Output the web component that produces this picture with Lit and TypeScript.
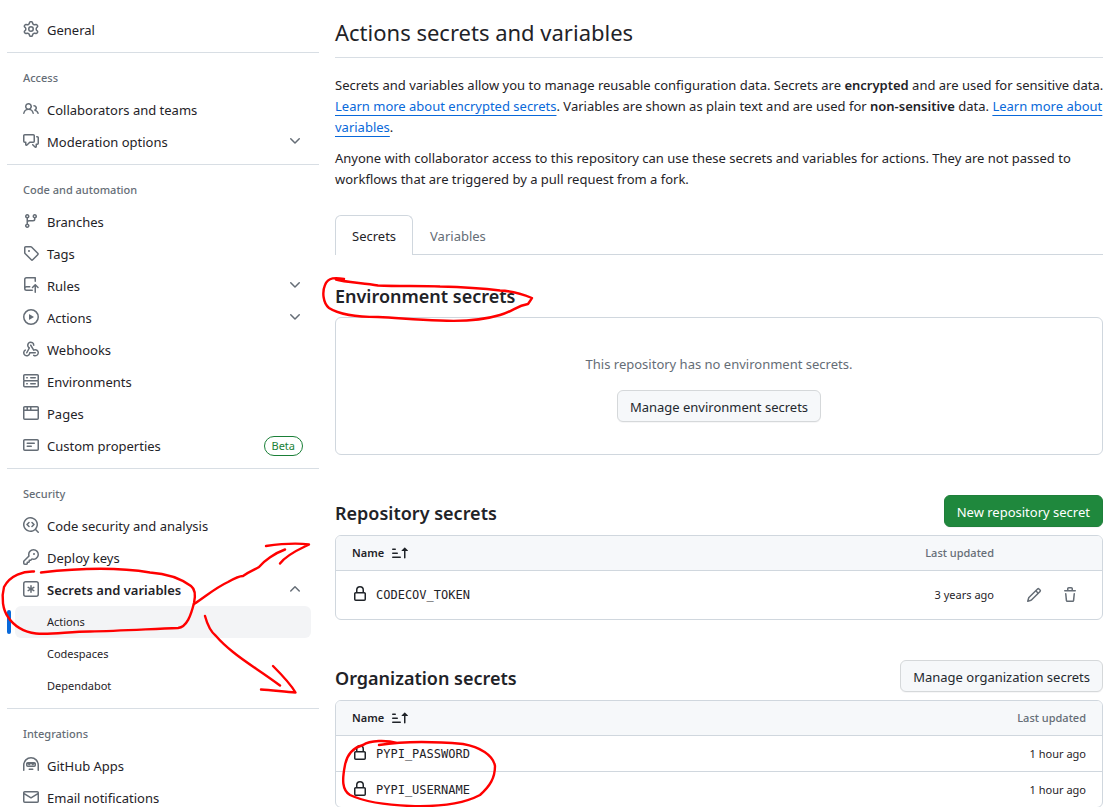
import { LitElement, html, css, svg, nothing } from "lit";
import { customElement, property, state } from "lit/decorators.js";
import { classMap } from "lit/directives/class-map.js";

const ICONS: Record<string, string> = {
  gear: "M8 0a8.2 8.2 0 0 1 .701.031C9.444.095 9.99.645 10.16 1.29l.288 1.107c.018.066.079.158.212.224.231.114.454.243.668.386.123.082.233.09.299.071l1.103-.303c.644-.176 1.392.021 1.82.63.27.385.506.792.704 1.218.315.675.111 1.422-.364 1.891l-.814.806c-.049.048-.098.147-.088.294.016.257.016.515 0 .772-.01.147.038.246.088.294l.814.806c.475.469.679 1.216.364 1.891a7.977 7.977 0 0 1-.704 1.217c-.428.61-1.176.807-1.82.63l-1.102-.302c-.067-.019-.177-.011-.3.071a5.909 5.909 0 0 1-.668.386c-.133.066-.194.158-.211.224l-.29 1.106c-.168.646-.715 1.196-1.458 1.26a8.006 8.006 0 0 1-1.402 0c-.743-.064-1.289-.614-1.458-1.26l-.289-1.106c-.018-.066-.079-.158-.212-.224a5.738 5.738 0 0 1-.668-.386c-.123-.082-.233-.09-.299-.071l-1.103.303c-.644.176-1.392-.021-1.82-.63a8.12 8.12 0 0 1-.704-1.218c-.315-.675-.111-1.422.363-1.891l.815-.806c.05-.048.098-.147.088-.294a6.214 6.214 0 0 1 0-.772c.01-.147-.038-.246-.088-.294l-.815-.806C.635 6.045.431 5.298.746 4.623a7.92 7.92 0 0 1 .704-1.217c.428-.61 1.176-.807 1.82-.63l1.102.302c.067.019.177.011.3-.071.214-.143.437-.272.668-.386.133-.066.194-.158.211-.224l.29-1.106C6.009.645 6.556.095 7.299.03 7.53.01 7.764 0 8 0Zm-.571 1.525c-.036.003-.108.036-.137.146l-.289 1.105c-.147.561-.549.967-.998 1.189-.173.086-.34.183-.5.29-.417.278-.97.423-1.529.27l-1.103-.303c-.109-.03-.175.016-.195.045-.22.312-.412.644-.573.99-.014.031-.021.11.059.19l.815.806c.411.406.562.957.53 1.456a4.709 4.709 0 0 0 0 .582c.032.499-.119 1.05-.53 1.456l-.815.806c-.081.08-.073.159-.059.19.162.346.353.677.573.989.02.03.085.076.195.046l1.102-.303c.56-.153 1.113-.008 1.53.27.161.107.328.204.501.29.447.222.85.629.997 1.189l.289 1.105c.029.109.101.143.137.146a6.6 6.6 0 0 0 1.142 0c.036-.003.108-.036.137-.146l.289-1.105c.147-.561.549-.967.998-1.189.173-.086.34-.183.5-.29.417-.278.97-.423 1.529-.27l1.103.303c.109.029.175-.016.195-.045.22-.313.411-.644.573-.99.014-.031.021-.11-.059-.19l-.815-.806c-.411-.406-.562-.957-.53-1.456a4.709 4.709 0 0 0 0-.582c-.032-.499.119-1.05.53-1.456l.815-.806c.081-.08.073-.159.059-.19a6.464 6.464 0 0 0-.573-.989c-.02-.03-.085-.076-.195-.046l-1.102.303c-.56.153-1.113.008-1.53-.27a4.44 4.44 0 0 0-.501-.29c-.447-.222-.85-.629-.997-1.189l-.289-1.105c-.029-.11-.101-.143-.137-.146a6.6 6.6 0 0 0-1.142 0ZM11 8a3 3 0 1 1-6 0 3 3 0 0 1 6 0ZM9.5 8a1.5 1.5 0 1 0-3.001.001A1.5 1.5 0 0 0 9.5 8Z",
  people: "M2 5.5a3.5 3.5 0 1 1 5.898 2.549 5.508 5.508 0 0 1 3.034 4.084.75.75 0 1 1-1.482.235 4 4 0 0 0-7.9 0 .75.75 0 0 1-1.482-.236A5.507 5.507 0 0 1 3.102 8.05 3.493 3.493 0 0 1 2 5.5ZM11 4a3.001 3.001 0 0 1 2.22 5.018 5.01 5.01 0 0 1 2.56 3.012.749.749 0 0 1-.885.954.752.752 0 0 1-.549-.514 3.507 3.507 0 0 0-2.522-2.372.75.75 0 0 1-.574-.73v-.352a.75.75 0 0 1 .416-.672A1.5 1.5 0 0 0 11 5.5.75.75 0 0 1 11 4Zm-5.5-.5a2 2 0 1 0-.001 3.999A2 2 0 0 0 5.5 3.5Z",
  discussion: "M1.75 1h8.5c.966 0 1.75.784 1.75 1.75v5.5A1.75 1.75 0 0 1 10.25 10H7.061l-2.574 2.573A1.458 1.458 0 0 1 2 11.543V10h-.25A1.75 1.75 0 0 1 0 8.25v-5.5C0 1.784.784 1 1.75 1ZM1.5 2.75v5.5c0 .138.112.25.25.25h1a.75.75 0 0 1 .75.75v2.19l2.72-2.72a.749.749 0 0 1 .53-.22h3.5a.25.25 0 0 0 .25-.25v-5.5a.25.25 0 0 0-.25-.25h-8.5a.25.25 0 0 0-.25.25Zm13 2a.25.25 0 0 0-.25-.25h-.5a.75.75 0 0 1 0-1.5h.5c.966 0 1.75.784 1.75 1.75v5.5A1.75 1.75 0 0 1 14.25 12H14v1.543a1.458 1.458 0 0 1-2.487 1.03L9.22 12.28a.749.749 0 0 1 .326-1.275.749.749 0 0 1 .734.215l2.22 2.22v-2.19a.75.75 0 0 1 .75-.75h1a.25.25 0 0 0 .25-.25Z",
  branch: "M9.5 3.25a2.25 2.25 0 1 1 3 2.122V6A2.5 2.5 0 0 1 10 8.5H6a1 1 0 0 0-1 1v1.128a2.251 2.251 0 1 1-1.5 0V5.372a2.25 2.25 0 1 1 1.5 0v1.836A2.493 2.493 0 0 1 6 7h4a1 1 0 0 0 1-1v-.628A2.25 2.25 0 0 1 9.5 3.25Zm-6 0a.75.75 0 1 0 1.5 0 .75.75 0 0 0-1.5 0Zm8.25-.75a.75.75 0 1 0 0 1.5.75.75 0 0 0 0-1.5ZM4.25 12a.75.75 0 1 0 0 1.5.75.75 0 0 0 0-1.5Z",
  tag: "M1 7.775V2.75C1 1.784 1.784 1 2.75 1h5.025c.464 0 .91.184 1.238.513l6.25 6.25a1.75 1.75 0 0 1 0 2.474l-5.026 5.026a1.75 1.75 0 0 1-2.474 0l-6.25-6.25A1.752 1.752 0 0 1 1 7.775Zm1.5 0c0 .066.026.13.073.177l6.25 6.25a.25.25 0 0 0 .354 0l5.025-5.025a.25.25 0 0 0 0-.354l-6.25-6.25a.25.25 0 0 0-.177-.073H2.75a.25.25 0 0 0-.25.25ZM6 5a1 1 0 1 1 0 2 1 1 0 0 1 0-2Z",
  rules: "M1 2.5A2.5 2.5 0 0 1 3.5 0h8.75a.75.75 0 0 1 .75.75v3.5a.75.75 0 0 1-1.5 0V1.5h-8a1 1 0 0 0-1 1v6.708A2.493 2.493 0 0 1 3.5 9h3.25a.75.75 0 0 1 0 1.5H3.5a1 1 0 0 0 0 2h5.75a.75.75 0 0 1 0 1.5H3.5A2.5 2.5 0 0 1 1 11.5ZM12.25 7c.2 0 .39.08.53.22l2.75 2.75a.75.75 0 0 1-1.06 1.06L13 9.56v5.69a.75.75 0 0 1-1.5 0V9.56l-1.47 1.47a.75.75 0 0 1-1.06-1.06l2.75-2.75a.75.75 0 0 1 .53-.22Z",
  play: "M8 0a8 8 0 1 1 0 16A8 8 0 0 1 8 0ZM1.5 8a6.5 6.5 0 1 0 13 0 6.5 6.5 0 0 0-13 0Zm4.879-2.773 4.264 2.559a.25.25 0 0 1 0 .428l-4.264 2.559A.25.25 0 0 1 6 10.559V5.442a.25.25 0 0 1 .379-.215Z",
  webhook: "M5.5 4.25a2.25 2.25 0 0 1 4.5 0 .75.75 0 0 0 1.5 0 3.75 3.75 0 1 0-6.14 2.889l-2.272 4.258a.75.75 0 0 0 1.324.706L7 7.25a.75.75 0 0 0-.309-1.015A2.25 2.25 0 0 1 5.5 4.25ZM7.364 3.607a.75.75 0 0 1 1.03.257l2.608 4.349a3.75 3.75 0 1 1-.628 6.785.75.75 0 0 1 .752-1.299 2.25 2.25 0 1 0-.033-3.88.75.75 0 0 1-1.03-.256L7.107 4.636a.75.75 0 0 1 .257-1.03ZM2.9 8.776A.75.75 0 0 1 2.625 9.8 2.25 2.25 0 1 0 6 11.75a.75.75 0 0 1 .75-.751h5.5a.75.75 0 0 1 0 1.5H7.425a3.751 3.751 0 1 1-5.55-3.998.75.75 0 0 1 1.024.274Z",
  server: "M1.75 1h12.5c.966 0 1.75.784 1.75 1.75v4c0 .372-.116.717-.314 1 .198.283.314.628.314 1v4a1.75 1.75 0 0 1-1.75 1.75H1.75A1.75 1.75 0 0 1 0 12.75v-4c0-.358.109-.707.314-1a1.739 1.739 0 0 1-.314-1v-4C0 1.784.784 1 1.75 1ZM1.5 2.75v4c0 .138.112.25.25.25h12.5a.25.25 0 0 0 .25-.25v-4a.25.25 0 0 0-.25-.25H1.75a.25.25 0 0 0-.25.25Zm.25 5.75a.25.25 0 0 0-.25.25v4c0 .138.112.25.25.25h12.5a.25.25 0 0 0 .25-.25v-4a.25.25 0 0 0-.25-.25ZM7 4.75A.75.75 0 0 1 7.75 4h4.5a.75.75 0 0 1 0 1.5h-4.5A.75.75 0 0 1 7 4.75ZM7.75 10h4.5a.75.75 0 0 1 0 1.5h-4.5a.75.75 0 0 1 0-1.5ZM3 4.75A.75.75 0 0 1 3.75 4h.5a.75.75 0 0 1 0 1.5h-.5A.75.75 0 0 1 3 4.75ZM3.75 10h.5a.75.75 0 0 1 0 1.5h-.5a.75.75 0 0 1 0-1.5Z",
  browser: "M0 2.75C0 1.784.784 1 1.75 1h12.5c.966 0 1.75.784 1.75 1.75v10.5A1.75 1.75 0 0 1 14.25 15H1.75A1.75 1.75 0 0 1 0 13.25ZM14.5 6h-13v7.25c0 .138.112.25.25.25h12.5a.25.25 0 0 0 .25-.25Zm-6-3.5v2h6V2.75a.25.25 0 0 0-.25-.25ZM5 2.5v2h2v-2Zm-3.25 0a.25.25 0 0 0-.25.25V4.5h2v-2Z",
  note: "M0 3.75C0 2.784.784 2 1.75 2h12.5c.966 0 1.75.784 1.75 1.75v8.5A1.75 1.75 0 0 1 14.25 14H1.75A1.75 1.75 0 0 1 0 12.25Zm1.75-.25a.25.25 0 0 0-.25.25v8.5c0 .138.112.25.25.25h12.5a.25.25 0 0 0 .25-.25v-8.5a.25.25 0 0 0-.25-.25ZM3.5 6.25a.75.75 0 0 1 .75-.75h7a.75.75 0 0 1 0 1.5h-7a.75.75 0 0 1-.75-.75Zm.75 2.25h4a.75.75 0 0 1 0 1.5h-4a.75.75 0 0 1 0-1.5Z",
  codescan: "M8.47 4.97a.75.75 0 0 0 0 1.06L9.94 7.5 8.47 8.97a.75.75 0 1 0 1.06 1.06l2-2a.75.75 0 0 0 0-1.06l-2-2a.75.75 0 0 0-1.06 0ZM6.53 6.03a.75.75 0 0 0-1.06-1.06l-2 2a.75.75 0 0 0 0 1.06l2 2a.75.75 0 1 0 1.06-1.06L5.06 7.5l1.47-1.47ZM12.246 13.307a7.501 7.501 0 1 1 1.06-1.06l2.474 2.473a.749.749 0 0 1-.326 1.275.749.749 0 0 1-.734-.215ZM1.5 7.5a6.002 6.002 0 0 0 3.608 5.504 6.002 6.002 0 0 0 6.486-1.117.748.748 0 0 1 .292-.293A6 6 0 1 0 1.5 7.5Z",
  key: "M10.5 0a5.499 5.499 0 1 1-1.288 10.848l-.932.932a.749.749 0 0 1-.53.22H7v.75a.749.749 0 0 1-.22.53l-.5.5a.749.749 0 0 1-.53.22H5v.75a.749.749 0 0 1-.22.53l-.5.5a.749.749 0 0 1-.53.22h-2A1.75 1.75 0 0 1 0 14.25v-2c0-.199.079-.389.22-.53l4.932-4.932A5.5 5.5 0 0 1 10.5 0Zm-4 5.5c-.001.431.069.86.205 1.269a.75.75 0 0 1-.181.768L1.5 12.56v1.69c0 .138.112.25.25.25h1.69l.06-.06v-1.19a.75.75 0 0 1 .75-.75h1.19l.06-.06v-1.19a.75.75 0 0 1 .75-.75h1.19l1.023-1.025a.75.75 0 0 1 .768-.18A4 4 0 1 0 6.5 5.5ZM11 6a1 1 0 1 1 0-2 1 1 0 0 1 0 2Z",
  asterisk: "M0 2.75A2.75 2.75 0 0 1 2.75 0h10.5A2.75 2.75 0 0 1 16 2.75v10.5A2.75 2.75 0 0 1 13.25 16H2.75A2.75 2.75 0 0 1 0 13.25ZM2.75 1.5c-.69 0-1.25.56-1.25 1.25v10.5c0 .69.56 1.25 1.25 1.25h10.5c.69 0 1.25-.56 1.25-1.25V2.75c0-.69-.56-1.25-1.25-1.25ZM8 4a.75.75 0 0 1 .75.75V6.7l1.69-.975a.75.75 0 0 1 .75 1.3L9.5 8l1.69.976a.75.75 0 0 1-.75 1.298L8.75 9.3v1.951a.75.75 0 0 1-1.5 0V9.299l-1.69.976a.75.75 0 0 1-.75-1.3L6.5 8l-1.69-.975a.75.75 0 0 1 .75-1.3l1.69.976V4.75A.75.75 0 0 1 8 4Z",
  hubot: "M0 8a8 8 0 1 1 16 0v5.25a.75.75 0 0 1-1.5 0V8a6.5 6.5 0 1 0-13 0v5.25a.75.75 0 0 1-1.5 0ZM5.5 12.25a.75.75 0 0 1 .75-.75h3.5a.75.75 0 0 1 0 1.5h-3.5a.75.75 0 0 1-.75-.75ZM3 6.75C3 5.784 3.784 5 4.75 5h6.5c.966 0 1.75.784 1.75 1.75v1.5A1.75 1.75 0 0 1 11.25 10h-6.5A1.75 1.75 0 0 1 3 8.25ZM4.5 6.9v1.35c0 .138.112.25.25.25h6.5a.25.25 0 0 0 .25-.25V6.9l-1.1 1.1a.75.75 0 0 1-1.06 0L8 6.9 6.66 8a.75.75 0 0 1-1.06 0Z",
  mail: "M1.75 2h12.5c.966 0 1.75.784 1.75 1.75v8.5A1.75 1.75 0 0 1 14.25 14H1.75A1.75 1.75 0 0 1 0 12.25v-8.5C0 2.784.784 2 1.75 2ZM1.5 12.251c0 .138.112.25.25.25h12.5a.25.25 0 0 0 .25-.25V5.809L8.38 9.397a.75.75 0 0 1-.76 0L1.5 5.809v6.442Zm13-8.181v-.32a.25.25 0 0 0-.25-.25H1.75a.25.25 0 0 0-.25.25v.32L8 7.88Z",
  down: "M12.78 5.22a.749.749 0 0 1 0 1.06l-4.25 4.25a.749.749 0 0 1-1.06 0L3.22 6.28a.749.749 0 1 1 1.06-1.06L8 8.939l3.72-3.719a.749.749 0 0 1 1.06 0Z",
  up: "M3.22 10.53a.749.749 0 0 1 0-1.06l4.25-4.25a.749.749 0 0 1 1.06 0l4.25 4.25a.749.749 0 1 1-1.06 1.06L8 6.811 4.28 10.53a.749.749 0 0 1-1.06 0Z",
  lock: "M4 4a4 4 0 0 1 8 0v2h.25c.966 0 1.75.784 1.75 1.75v5.5A1.75 1.75 0 0 1 12.25 15h-8.5A1.75 1.75 0 0 1 2 13.25v-5.5C2 6.784 2.784 6 3.75 6H4Zm8.25 3.5h-8.5a.25.25 0 0 0-.25.25v5.5c0 .138.112.25.25.25h8.5a.25.25 0 0 0 .25-.25v-5.5a.25.25 0 0 0-.25-.25ZM10.5 6V4a2.5 2.5 0 1 0-5 0v2Z",
  pencil: "M11.013 1.427a1.75 1.75 0 0 1 2.474 0l1.086 1.086a1.75 1.75 0 0 1 0 2.474l-8.61 8.61c-.21.21-.47.364-.756.445l-3.251.93a.75.75 0 0 1-.927-.928l.929-3.25c.081-.286.235-.547.445-.758l8.61-8.61Zm.176 4.823L9.75 4.81l-6.286 6.287a.253.253 0 0 0-.064.108l-.558 1.953 1.953-.558a.253.253 0 0 0 .108-.064Zm1.238-3.763a.25.25 0 0 0-.354 0L10.811 3.75l1.439 1.44 1.263-1.263a.25.25 0 0 0 0-.354Z",
  trash: "M11 1.75V3h2.25a.75.75 0 0 1 0 1.5H2.75a.75.75 0 0 1 0-1.5H5V1.75C5 .784 5.784 0 6.75 0h2.5C10.216 0 11 .784 11 1.75ZM4.496 6.675l.66 6.6a.25.25 0 0 0 .249.225h5.19a.25.25 0 0 0 .249-.225l.66-6.6a.75.75 0 0 1 1.492.149l-.66 6.6A1.748 1.748 0 0 1 10.595 15h-5.19a1.75 1.75 0 0 1-1.741-1.575l-.66-6.6a.75.75 0 1 1 1.492-.15ZM6.5 1.75V3h3V1.75a.25.25 0 0 0-.25-.25h-2.5a.25.25 0 0 0-.25.25Z",
  sort: "m12.927 2.573 3 3A.25.25 0 0 1 15.75 6H13.5v6.75a.75.75 0 0 1-1.5 0V6H9.75a.25.25 0 0 1-.177-.427l3-3a.25.25 0 0 1 .354 0ZM0 12.25a.75.75 0 0 1 .75-.75h7.5a.75.75 0 0 1 0 1.5H.75a.75.75 0 0 1-.75-.75Zm0-4a.75.75 0 0 1 .75-.75h4.5a.75.75 0 0 1 0 1.5H.75A.75.75 0 0 1 0 8.25Zm0-4a.75.75 0 0 1 .75-.75h2.5a.75.75 0 0 1 0 1.5H.75A.75.75 0 0 1 0 4.25Z",
};

const icon = (name: string) => html`<svg class="icon" viewBox="0 0 16 16" width="16" height="16" aria-hidden="true">
  ${svg`<path fill="currentColor" fill-rule="evenodd" d=${ICONS[name]}></path>`}
</svg>`;

interface NavItem {
  label: string;
  icon: string;
  expandable?: boolean;
  badge?: string;
  children?: string[];
}

interface NavSection {
  title?: string;
  items: NavItem[];
}

const NAV: NavSection[] = [
  { items: [{ label: "General", icon: "gear" }] },
  {
    title: "Access",
    items: [
      { label: "Collaborators and teams", icon: "people" },
      { label: "Moderation options", icon: "discussion", expandable: true },
    ],
  },
  {
    title: "Code and automation",
    items: [
      { label: "Branches", icon: "branch" },
      { label: "Tags", icon: "tag" },
      { label: "Rules", icon: "rules", expandable: true },
      { label: "Actions", icon: "play", expandable: true },
      { label: "Webhooks", icon: "webhook" },
      { label: "Environments", icon: "server" },
      { label: "Pages", icon: "browser" },
      { label: "Custom properties", icon: "note", badge: "Beta" },
    ],
  },
  {
    title: "Security",
    items: [
      { label: "Code security and analysis", icon: "codescan" },
      { label: "Deploy keys", icon: "key" },
      {
        label: "Secrets and variables",
        icon: "asterisk",
        expandable: true,
        children: ["Actions", "Codespaces", "Dependabot"],
      },
    ],
  },
  {
    title: "Integrations",
    items: [
      { label: "GitHub Apps", icon: "hubot" },
      { label: "Email notifications", icon: "mail" },
    ],
  },
];

const shared = css`
  * {
    box-sizing: border-box;
  }
  .icon {
    display: block;
    flex: none;
  }
  button {
    font: inherit;
    color: inherit;
    cursor: pointer;
  }
`;

@customElement("settings-nav")
class SettingsNav extends LitElement {
  @state() private current = "Actions";

  static styles = [
    shared,
    css`
      :host {
        display: block;
      }
      .section + .section {
        border-top: 1px solid #d8dee4;
        margin-top: 6px;
      }
      .title {
        margin: 0;
        padding: 16px 16px 7px;
        font-size: 11px;
        line-height: 18px;
        font-weight: 500;
        color: #656d76;
      }
      .list {
        list-style: none;
        margin: 0;
        padding: 0;
      }
      .list > li {
        padding: 0 8px;
      }
      .item {
        display: flex;
        align-items: center;
        gap: 8px;
        width: 100%;
        height: 32px;
        padding: 0 8px;
        border: 0;
        border-radius: 6px;
        background: none;
        color: #1f2328;
        line-height: 20px;
        text-align: left;
        text-decoration: none;
      }
      .item .icon {
        color: #656d76;
        margin-bottom: 2px;
      }
      .label {
        flex: 1;
      }
      .open .label {
        font-weight: 600;
      }
      .badge {
        border: 1px solid #1a7f37;
        border-radius: 10px;
        padding: 0 7px;
        font-size: 11px;
        line-height: 18px;
        color: #1a7f37;
      }
      .sub {
        list-style: none;
        margin: 0;
        padding: 0;
      }
      .sub li {
        position: relative;
      }
      .sub .item {
        padding-left: 32px;
        font-size: 11px;
      }
      .sub .active {
        background: #f3f4f6;
      }
      .sub .active::before {
        content: "";
        position: absolute;
        left: -8px;
        top: 4px;
        width: 4px;
        height: 24px;
        border-radius: 6px;
        background: #0969da;
      }
    `,
  ];

  private renderItem(item: NavItem) {
    const open = !!item.children;
    const body = html`${icon(item.icon)}<span class="label">${item.label}</span>`;
    return html`<li>
      ${item.expandable
        ? html`<button class=${classMap({ item: true, open })} type="button" aria-expanded=${open ? "true" : "false"}>
            ${body}${icon(open ? "up" : "down")}
          </button>`
        : html`<a class="item" href="#">${body}${item.badge ? html`<span class="badge">${item.badge}</span>` : nothing}</a>`}
      ${item.children
        ? html`<ul class="sub">
            ${item.children.map(
              (label) => html`<li>
                <a
                  class=${classMap({ item: true, active: label === this.current })}
                  href="#"
                  @click=${() => (this.current = label)}
                  >${label}</a
                >
              </li>`
            )}
          </ul>`
        : nothing}
    </li>`;
  }

  render() {
    return html`<nav aria-label="Settings">
      ${NAV.map(
        (section) => html`<div class="section">
          ${section.title ? html`<h2 class="title">${section.title}</h2>` : nothing}
          <ul class="list">
            ${section.items.map((item) => this.renderItem(item))}
          </ul>
        </div>`
      )}
    </nav>`;
  }
}

interface Secret {
  name: string;
  updated: string;
}

@customElement("secrets-table")
class SecretsTable extends LitElement {
  @property({ attribute: false }) rows: Secret[] = [];
  @property({ type: Boolean }) editable = false;

  static styles = [
    shared,
    css`
      :host {
        display: block;
        border: 1px solid #d0d7de;
        border-radius: 6px;
        overflow: hidden;
      }
      table {
        width: 100%;
        border-spacing: 0;
        font-size: 11px;
        line-height: 18px;
      }
      th,
      td {
        padding: 0 16px;
        height: 34px;
        text-align: left;
        vertical-align: middle;
      }
      th {
        background: #f6f8fa;
        font-weight: 500;
        color: #656d76;
      }
      td {
        border-top: 1px solid #d0d7de;
        height: 36px;
      }
      .editable td {
        height: 49px;
      }
      .sort {
        display: flex;
        align-items: center;
        gap: 8px;
        padding: 0;
        border: 0;
        background: none;
        font-weight: 600;
        color: #1f2328;
      }
      .name {
        display: flex;
        align-items: center;
        gap: 8px;
        font-family: "DejaVu Sans Mono", monospace;
        font-size: 12px;
      }
      .name .icon {
        margin-bottom: 2px;
      }
      .updated {
        text-align: right;
      }
      .tools {
        width: 92px;
        padding-left: 8px;
      }
      .buttons {
        display: flex;
        gap: 4px;
      }
      .tool {
        display: grid;
        place-items: center;
        width: 32px;
        height: 32px;
        padding: 0;
        border: 0;
        background: none;
        color: #656d76;
      }
    `,
  ];

  render() {
    return html`<table class=${classMap({ editable: this.editable })}>
      <thead>
        <tr>
          <th scope="col"><button class="sort" type="button">Name ${icon("sort")}</button></th>
          <th class="updated" scope="col">Last updated</th>
          ${this.editable ? html`<th class="tools" scope="col" aria-label="Tools"></th>` : nothing}
        </tr>
      </thead>
      <tbody>
        ${this.rows.map(
          (row) => html`<tr>
            <td><span class="name">${icon("lock")}<span>${row.name}</span></span></td>
            <td class="updated">${row.updated}</td>
            ${this.editable
              ? html`<td class="tools">
                  <span class="buttons">
                    <button class="tool" type="button" aria-label="Edit ${row.name}">${icon("pencil")}</button>
                    <button class="tool" type="button" aria-label="Remove ${row.name}">${icon("trash")}</button>
                  </span>
                </td>`
              : nothing}
          </tr>`
        )}
      </tbody>
    </table>`;
  }
}

const REPOSITORY_SECRETS: Secret[] = [{ name: "CODECOV_TOKEN", updated: "3 years ago" }];
const ORGANIZATION_SECRETS: Secret[] = [
  { name: "PYPI_PASSWORD", updated: "1 hour ago" },
  { name: "PYPI_USERNAME", updated: "1 hour ago" },
];

// Freehand pen strokes drawn over the page.
const STROKES = [
  "M34 571.5 C24 571 10 575 4 587 C1 598 3 610 8 617 C14 626 24 632 36 633.5 C50 635 70 631.5 90 631.5 C120 631 150 629 178 628 C187 627 191 615 194 603 C196 594 195 589 191 586 C180 578 165 573.5 150 572.5 C120 567.5 80 568 41 572.5",
  "M194 604 C205 597 215 588 228 582 C235 578 240 576 243 576 C250 571 256 569 259 567 C264 561 275 553 285 549.5",
  "M266 546 C280 544 298 543 309 544.5 C302 548 287 554 280 563.5",
  "M205 616 C208 627 211 632 216 636 C222 643 228 648 233 652 C245 662 262 672 280 685.5",
  "M273 666 C282 675 290 683 295.5 692.5 C285 692 272 690 261 689.5",
  "M344 279 C336 277.5 328 277 325 285 C322 292 323 303 329 308 C340 315 355 317 378 317 C400 318 415 320 440 320.5 C460 321.5 480 321 500 315 C514 311 516 306 528 304 C530 301 531 300 532 298 C522 294 512 291 500 290.5 C480 288 460 287 440 286.5 C420 285.5 400 286.5 378 285.5 C362 283 344 282 336 279.5",
  "M397 743 C387 740 370 740 363 745 C352 748 347 755 345 765 C342 780 342 790 350 795 C365 802 385 805 410 806 C440 807 465 803 480 795 C490 786 495 778 495 766 C493 755 480 747 463 744 C440 742 405 741 379 745",
];

@customElement("app-root")
class AppRoot extends LitElement {
  @state() private tab = "Secrets";

  static styles = [
    shared,
    css`
      :host {
        display: block;
        position: relative;
        min-height: 100vh;
        background: #ffffff;
        color: #1f2328;
        font-family: "Noto Sans", sans-serif;
        font-size: 13px;
        line-height: 21px;
      }
      .layout {
        display: grid;
        grid-template-columns: 312px minmax(0, 1fr);
        gap: 16px;
        padding: 14px 8px 0 7px;
      }
      h1 {
        margin: 0 0 17px;
        padding: 1px 0 7px;
        border-bottom: 1px solid #d8dee4;
        font-size: 22px;
        line-height: 35px;
        font-weight: 400;
      }
      h2 {
        margin: 0;
        font-size: 18px;
        line-height: 26px;
        font-weight: 600;
      }
      p {
        margin: 0 0 10px;
      }
      b {
        font-weight: 600;
      }
      p a {
        color: #0969da;
        text-underline-offset: 4px;
      }
      .intro {
        margin-right: -4px;
      }
      .tabs {
        display: flex;
        margin: 25px 0 28px;
        box-shadow: inset 0 -1px #d0d7de;
      }
      .tab {
        height: 40px;
        padding: 2px 16px 0;
        border: 1px solid transparent;
        border-bottom: 0;
        border-radius: 6px 6px 0 0;
        background: none;
        color: #656d76;
      }
      .tab.selected {
        border-color: #d0d7de;
        background: #ffffff;
        color: #1f2328;
      }
      .blank {
        display: flex;
        flex-direction: column;
        align-items: center;
        gap: 15px;
        margin: 8px 0 40px;
        padding: 36px 32px 32px;
        border: 1px solid #d0d7de;
        border-radius: 6px;
        color: #656d76;
      }
      .blank p {
        margin: 0;
      }
      .head {
        display: flex;
        align-items: center;
        justify-content: space-between;
        margin-bottom: 8px;
      }
      .head h2 {
        padding-top: 3px;
      }
      .group + .group {
        margin-top: 40px;
      }
      .btn {
        height: 32px;
        padding: 2px 12px 0;
        border: 1px solid #d5d8da;
        border-radius: 6px;
        background: #f6f8fa;
        color: #24292f;
        box-shadow: 0 1px 0 rgba(31, 35, 40, 0.04);
      }
      .btn.primary {
        border-color: #1f7f3b;
        background: #1f883d;
        color: #ffffff;
      }
      .ink {
        position: absolute;
        inset: 0;
        width: 100%;
        height: 100%;
        overflow: hidden;
        pointer-events: none;
      }
    `,
  ];

  render() {
    return html`<div class="layout">
        <settings-nav></settings-nav>
        <main>
          <h1>Actions secrets and variables</h1>
          <div class="intro">
            <p>
              Secrets and variables allow you to manage reusable configuration data. Secrets are <b>encrypted</b> and
              are used for sensitive data. <a href="#">Learn more about encrypted secrets</a>. Variables are shown as
              plain text and are used for <b>non-sensitive</b> data. <a href="#">Learn more about variables</a>.
            </p>
            <p>
              Anyone with collaborator access to this repository can use these secrets and variables for actions. They
              are not passed to workflows that are triggered by a pull request from a fork.
            </p>
          </div>
          <div class="tabs" role="tablist">
            ${["Secrets", "Variables"].map(
              (name) => html`<button
                class=${classMap({ tab: true, selected: name === this.tab })}
                role="tab"
                type="button"
                aria-selected=${name === this.tab ? "true" : "false"}
                @click=${() => (this.tab = name)}
              >
                ${name}
              </button>`
            )}
          </div>
          <section>
            <h2>Environment secrets</h2>
            <div class="blank">
              <p>This repository has no environment secrets.</p>
              <button class="btn" type="button">Manage environment secrets</button>
            </div>
          </section>
          <section class="group">
            <div class="head">
              <h2>Repository secrets</h2>
              <button class="btn primary" type="button">New repository secret</button>
            </div>
            <secrets-table editable .rows=${REPOSITORY_SECRETS}></secrets-table>
          </section>
          <section class="group">
            <div class="head">
              <h2>Organization secrets</h2>
              <button class="btn" type="button">Manage organization secrets</button>
            </div>
            <secrets-table .rows=${ORGANIZATION_SECRETS}></secrets-table>
          </section>
        </main>
      </div>
      <svg class="ink" aria-hidden="true">
        ${STROKES.map(
          (d) =>
            svg`<path d=${d} fill="none" stroke="#ff0000" stroke-width="2.4" stroke-linecap="round" stroke-linejoin="round"></path>`
        )}
      </svg>`;
  }
}
